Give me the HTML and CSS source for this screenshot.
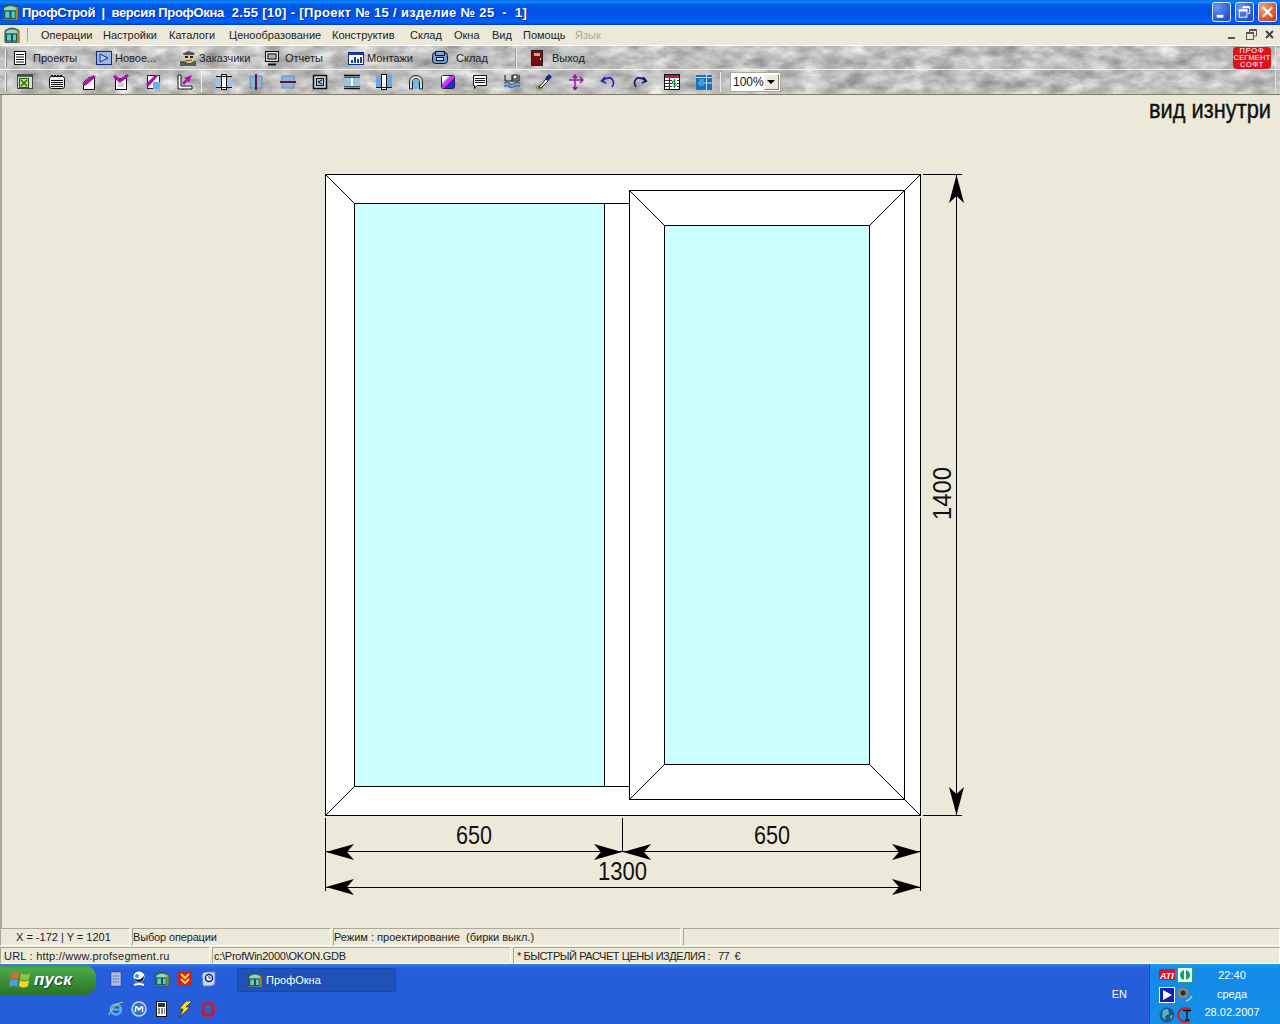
FILE: index.html
```html
<!DOCTYPE html>
<html lang="ru">
<head>
<meta charset="utf-8">
<title>ПрофСтрой</title>
<link rel="stylesheet" href="styles.css">
</head>
<body>
<svg class="defs" width="0" height="0" aria-hidden="true">
  <defs>
    <filter id="marble" x="0" y="0" width="100%" height="100%" color-interpolation-filters="sRGB">
      <feTurbulence type="fractalNoise" baseFrequency="0.045 0.09" numOctaves="4" seed="7"/>
      <feColorMatrix type="matrix" values="0.36 0.36 0 0 0.39  0.36 0.36 0 0 0.39  0.36 0.36 0 0 0.39  0 0 0 0 1"/>
    </filter>
    <symbol id="app" viewBox="0 0 16 17">
      <path d="M1 16V4Q8-1 15 4V16Z" fill="#2f8f86" stroke="#3a4a40"/>
      <path d="M2 5Q8 1 14 5V7H2Z" fill="#a4d0b8"/>
      <rect x="2.500" y="7.500" width="5" height="7" fill="#58d0c8" stroke="#14524c"/>
      <rect x="8.500" y="7.500" width="4" height="7" fill="#58d0c8" stroke="#14524c"/>
      <path d="M14 4V16" stroke="#b8861c" stroke-width="2"/>
      <path d="M1 15.500H15" stroke="#777"/>
    </symbol>
    <symbol id="door" viewBox="0 0 16 16">
      <rect x="2.500" y="0.500" width="11" height="15" fill="#7a0a14" stroke="#222"/>
      <rect x="5" y="3" width="6" height="3" fill="#d9a0a0"/>
      <rect x="11" y="8" width="1" height="2" fill="#e8d080"/>
    </symbol>
  </defs>
</svg>

<header class="titlebar">
  <svg class="ico16 title-ico"><use href="#app"/></svg>
  <span class="title-text title-a">ПрофСтрой  |  версия ПрофОкна</span><span class="title-text title-b">  2.55 [10] - [Проект № 15 / изделие № 25  -  1]</span>
  <div class="win-btns">
    <div class="wbtn"><svg width="18" height="18" viewBox="0 0 18 18"><rect x="4" y="12" width="7" height="3" fill="#fff"/></svg></div>
    <div class="wbtn"><svg width="18" height="18" viewBox="0 0 18 18" fill="none" stroke="#fff"><path d="M7.500 5.500V3.500H14.500V10.500H12.500"/><path d="M7 4H14" stroke-width="2"/><rect x="3.500" y="6.500" width="8" height="8"/><path d="M3 7.500H12" stroke-width="2"/></svg></div>
    <div class="wbtn wclose"><svg width="18" height="18" viewBox="0 0 18 18" stroke="#fff" stroke-width="2.200"><path d="M4 4L14 14M14 4L4 14"/></svg></div>
  </div>
</header>

<nav class="menubar">
  <svg class="ico16 menu-ico"><use href="#app"/></svg>
  <span class="menu-sep"></span>
  <div class="menu-items">
    <span>Операции</span><span>Настройки</span><span>Каталоги</span><span>Ценообразование</span><span>Конструктив</span><span>Склад</span><span>Окна</span><span>Вид</span><span>Помощь</span><span class="disabled">Язык</span>
  </div>
  <div class="mdi-btns">
    <svg width="18" height="18" viewBox="0 0 18 18"><rect x="5" y="11" width="7" height="2" fill="#555"/></svg>
    <svg width="18" height="18" viewBox="0 0 18 18" fill="none" stroke="#555"><path d="M7.500 6V3.500H14.500V10H12"/><path d="M7 4.500H14"/><rect x="4.500" y="6.500" width="7" height="7"/><path d="M4 7.500H12"/></svg>
    <svg width="18" height="18" viewBox="0 0 18 18" stroke="#444" stroke-width="2"><path d="M5 5L12 12M12 5L5 12"/></svg>
  </div>
</nav>

<section class="toolbars">
  <svg class="marble" width="1280" height="49"><rect width="1280" height="49" filter="url(#marble)"/></svg>
  <div class="tb-row tb-main">
    <div class="tb-item"><svg class="ico16" viewBox="0 0 16 16"><rect x="2.500" y="1.500" width="11" height="13" fill="#fff" stroke="#111"/><path d="M4 4.500H12M4 7H12M4 9.500H12M4 12H12" stroke="#111"/></svg><span class="lbl-mid">Проекты</span></div>
    <div class="tb-item"><svg class="ico16" viewBox="0 0 16 16"><rect x="0.500" y="1.500" width="15" height="13" fill="#9db8e8" stroke="#102a80"/><path d="M4 4L12 8L4 12Z" fill="#b8cdf0" stroke="#102a80"/></svg><span>Новое...</span></div>
    <div class="tb-item"><svg class="ico16" viewBox="0 0 16 16"><rect x="0" y="11" width="16" height="5" fill="#3a6a4a"/><ellipse cx="9" cy="7" rx="6" ry="6" fill="#e0c8a0"/><path d="M2 4L8 1L15 3L14 5H5Z" fill="#555"/><rect x="5" y="6" width="3" height="2" fill="#222"/><rect x="10" y="6" width="3" height="2" fill="#222"/><path d="M5 11L12 10" stroke="#833"/></svg><span>Заказчики</span></div>
    <div class="tb-item"><svg class="ico16" viewBox="0 0 16 16"><rect x="1.500" y="1.500" width="13" height="10" fill="#d8d8d8" stroke="#111"/><rect x="4" y="4" width="8" height="5" fill="#a8b4d0" stroke="#111"/><path d="M4 14.500H12" stroke="#111" stroke-width="2"/></svg><span class="lbl-mid">Отчеты</span></div>
    <div class="tb-item"><svg class="ico16" viewBox="0 0 16 16"><rect x="0.500" y="2.500" width="15" height="12" fill="#fff" stroke="#102a80"/><rect x="1" y="3" width="14" height="2" fill="#1c3ca8"/><path d="M4 13V10M7 13V7M10 13V9M13 13V7" stroke="#1c3ca8" stroke-width="2"/></svg><span>Монтажи</span></div>
    <div class="tb-item"><svg class="ico16" viewBox="0 0 16 16"><rect x="0.500" y="2.500" width="15" height="11" rx="3" fill="#6a9ad8" stroke="#111"/><rect x="3.500" y="1.500" width="9" height="4" fill="#7aa8e0" stroke="#111"/><rect x="4.500" y="7.500" width="7" height="3" fill="#dde" stroke="#111"/></svg><span class="lbl-far">Склад</span></div>
    <div class="tb-sep"></div>
    <div class="tb-item tb-exit"><svg class="ico16"><use href="#door"/></svg><span class="lbl-far">Выход</span></div>
    <div class="logo"><span>ПРОФ</span><span class="logo-mid">СЕГМЕНТ</span><span>СОФТ</span></div>
  </div>
  <div class="tb-row tb-tools">
    <div class="tool"><svg class="ico16" viewBox="0 0 16 16"><rect x="0.500" y="0.500" width="15" height="14" fill="#ddd" stroke="#444"/><rect x="1" y="1" width="14" height="2" fill="#555"/><rect x="2.500" y="4.500" width="9" height="9" fill="#b8e078" stroke="#275c10"/><path d="M4 6L10 12M10 6L4 12" stroke="#275c10" stroke-width="1.300"/></svg></div>
    <div class="tool"><svg class="ico16" viewBox="0 0 16 16"><rect x="0.500" y="2.500" width="15" height="12" rx="2" fill="#eee" stroke="#111"/><path d="M2 1.500H14" stroke="#111" stroke-dasharray="2 1"/><path d="M2 6.500H14M2 8.500H14M2 10.500H14M2 12.500H14" stroke="#111"/></svg></div>
    <div class="tool"><svg class="ico16" viewBox="0 0 16 16"><path d="M2.500 8.500L8 3.500H13.500V15.500H2.500Z" fill="#fff" stroke="#111"/><path d="M1 10L12 1L15 3L4 12Z" fill="#b010b0"/></svg></div>
    <div class="tool"><svg class="ico16" viewBox="0 0 16 16"><rect x="2.500" y="4.500" width="11" height="11" fill="#fff" stroke="#111"/><path d="M1 2L7 7L15 1" fill="none" stroke="#b010b0" stroke-width="3"/><path d="M5 10H11M5 12H11" stroke="#999"/></svg></div>
    <div class="tool"><svg class="ico16" viewBox="0 0 16 16"><rect x="2.500" y="1.500" width="12" height="13" fill="#fff" stroke="#222"/><rect x="8" y="8" width="7" height="7" fill="#6ab0f0"/><path d="M1 10L10 1H14L3 13Z" fill="#b010b0"/></svg></div>
    <div class="tool"><svg class="ico16" viewBox="0 0 16 16"><path d="M1 1H4V12H15V15H1Z" fill="#fff" stroke="#111"/><path d="M5 9L9 5L7 4L15 1L12 9L11 7L7 11Z" fill="#b010b0"/></svg></div>
    <div class="tool-sep"></div>
    <div class="tool"><svg class="ico16" viewBox="0 0 16 16"><rect x="0" y="3" width="16" height="10" fill="#9cc4e4"/><rect x="5.500" y="0.500" width="5" height="15" fill="#fff" stroke="#111"/><path d="M0 2.500H16M0 13.500H16" stroke="#111"/></svg></div>
    <div class="tool"><svg class="ico16" viewBox="0 0 16 16"><rect x="2" y="2" width="12" height="12" fill="#8cb4d8" stroke="#6a8cb0"/><path d="M8 0V16" stroke="#6a1030" stroke-width="2"/></svg></div>
    <div class="tool"><svg class="ico16" viewBox="0 0 16 16"><rect x="2" y="2" width="12" height="12" fill="#8cb4d8" stroke="#6a8cb0"/><path d="M0 8H16" stroke="#6a1030" stroke-width="2"/></svg></div>
    <div class="tool"><svg class="ico16" viewBox="0 0 16 16"><rect x="1.500" y="1.500" width="13" height="13" fill="#c8d4d8" stroke="#111" stroke-width="1.500"/><rect x="4.500" y="4.500" width="7" height="7" fill="#9cc4e4" stroke="#111"/><path d="M10 6L6 8L10 10" fill="none" stroke="#111"/></svg></div>
    <div class="tool"><svg class="ico16" viewBox="0 0 16 16"><rect x="0" y="4" width="16" height="8" fill="#9cc4e4"/><path d="M0 1.500H16M0 14.500H16" stroke="#111" stroke-width="1.500"/><path d="M0 3.500H16M0 12.500H16" stroke="#555"/><path d="M8 4V12" stroke="#fff" stroke-width="2"/></svg></div>
    <div class="tool"><svg class="ico16" viewBox="0 0 16 16"><rect x="0" y="1" width="16" height="13" fill="#6ea8e0"/><rect x="5.500" y="0.500" width="5" height="15" fill="#fff" stroke="#111"/><path d="M0 13.500H16" stroke="#111"/></svg></div>
    <div class="tool"><svg class="ico16" viewBox="0 0 16 16"><path d="M1.500 15V8Q1.500 1.500 8 1.500Q14.500 1.500 14.500 8V15H11.500V8Q11.500 4.500 8 4.500Q4.500 4.500 4.500 8V15Z" fill="#d8d8d8" stroke="#222"/><path d="M5 15V8Q5 5 8 5Q11 5 11 8V15Z" fill="#78b8e8"/></svg></div>
    <div class="tool"><svg class="ico16" viewBox="0 0 16 16"><rect x="1.500" y="1.500" width="13" height="13" rx="2" fill="#2030d0" stroke="#223"/><path d="M2 11L11 2H14V4L4 14H2Z" fill="#f020f0"/><path d="M2 9L9 2H11L2 11Z" fill="#80c8f0"/><path d="M2 2H9L2 9Z" fill="#fff"/></svg></div>
    <div class="tool"><svg class="ico16" viewBox="0 0 16 16"><path d="M1.500 1.500H14.500V11.500H5L2.500 14.500V11.500H1.500Z" fill="#fff" stroke="#111"/><path d="M3 4.500H13M3 6.500H13M3 8.500H13" stroke="#111"/></svg></div>
    <div class="tool"><svg class="ico16" viewBox="0 0 16 16"><path d="M1 1V7H15V1M8 1V7" fill="none" stroke="#111"/><rect x="9" y="1" width="4" height="4" fill="#fff" stroke="#111"/><path d="M0 9.500Q3 7.500 5 9.500T10 9.500T16 9.500M0 12.500Q3 10.500 5 12.500T10 12.500T16 12.500" fill="none" stroke="#3070c0" stroke-width="1.500"/></svg></div>
    <div class="tool"><svg class="ico16" viewBox="0 0 16 16"><ellipse cx="3.500" cy="13.500" rx="3.500" ry="2" fill="#8a9020"/><path d="M3 13L10 5L12 7L5 14Z" fill="#eee" stroke="#222"/><path d="M9 4L13 0L16 3L12 7Z" fill="#102a80"/></svg></div>
    <div class="tool"><svg class="ico16" viewBox="0 0 16 16" fill="none" stroke="#902090" stroke-width="1.500"><path d="M7 2V15M1 6H15M5 4L7 1L9 4M12 3L15 6L12 9M5 13L7 16L9 13"/></svg></div>
    <div class="tool"><svg class="ico16" viewBox="0 0 16 16" fill="none" stroke="#2020c0" stroke-width="1.600"><path d="M5 3L1.500 7L6 9"/><path d="M2 7Q8 2 12 5Q15 9 12 13"/></svg></div>
    <div class="tool"><svg class="ico16" viewBox="0 0 16 16" fill="none" stroke="#101860" stroke-width="1.600"><path d="M11 3L14.500 7L10 9"/><path d="M14 7Q8 2 4 5Q1 9 4 13"/></svg></div>
    <div class="tool"><svg class="ico16" viewBox="0 0 16 16"><rect x="0.500" y="0.500" width="15" height="15" fill="#fff" stroke="#111"/><rect x="1" y="1" width="14" height="3" fill="#d01030"/><path d="M1 6.500H15M1 9.500H15M1 12.500H15M5.500 4V15" stroke="#333"/><rect x="8" y="5" width="5" height="9" fill="#fff"/><path d="M10.500 5V14M8.500 7H12M8.500 12H12M8.500 7V9.500H12V12" fill="none" stroke="#089030"/></svg></div>
    <div class="tool"><svg class="ico16" viewBox="0 0 16 16"><rect x="0" y="1" width="16" height="15" fill="#1c70b8"/><path d="M0 3.500H16M10.500 0V16M2 9H16" stroke="#bfe0f8"/><rect x="3" y="5" width="5" height="7" fill="#38a0e0"/></svg></div>
    <div class="tool-sep tool-sep-wide"></div>
    <div class="combo"><span class="combo-val">100%</span><span class="combo-btn"><i></i></span></div>
  </div>
</section>

<main class="canvas">
  <svg class="drawing" width="1280" height="833" viewBox="0 95 1280 833">
    <g stroke="#000" stroke-width="1" fill="#fff">
      <rect x="325.500" y="174.500" width="595" height="641"/>
      <rect x="354.500" y="203.500" width="250" height="583" fill="#ccffff"/>
      <rect x="604.500" y="203.500" width="25" height="583"/>
      <path d="M325.500 174.500L354.500 203.500M325.500 815.500L354.500 786.500M920.500 174.500L904.500 190.500M920.500 815.500L904.500 799.500" fill="none"/>
      <rect x="629.500" y="190.500" width="275" height="609"/>
      <rect x="664.500" y="225.500" width="205" height="539" fill="#ccffff"/>
      <path d="M629.500 190.500L664.500 225.500M904.500 190.500L869.500 225.500M629.500 799.500L664.500 764.500M904.500 799.500L869.500 764.500" fill="none"/>
    </g>
    <g stroke="#000" stroke-width="1" fill="none">
      <path d="M923 174.500H962M923 815.500H962M956.500 175V815"/>
      <path d="M325.500 818V891M622.500 818V852M920.500 818V891"/>
      <path d="M326 851.500H920M326 887.500H920"/>
    </g>
    <g fill="#000">
      <path d="M956.500 175L964 203L956.500 196L949 203Z"/>
      <path d="M956.500 815L964 787L956.500 794L949 787Z"/>
      <path d="M326 852L354 844L347 852L354 860Z"/>
      <path d="M622 852L594 844L601 852L594 860Z"/>
      <path d="M623 852L651 844L644 852L651 860Z"/>
      <path d="M920 852L892 844L899 852L892 860Z"/>
      <path d="M326 887L354 879L347 887L354 895Z"/>
      <path d="M920 887L892 879L899 887L892 895Z"/>
    </g>
    <g class="dim">
      <text x="456" y="844" textLength="36" lengthAdjust="spacingAndGlyphs">650</text>
      <text x="754" y="844" textLength="36" lengthAdjust="spacingAndGlyphs">650</text>
      <text x="598" y="880" textLength="49" lengthAdjust="spacingAndGlyphs">1300</text>
      <text transform="translate(951 520) rotate(-90)" textLength="53" lengthAdjust="spacingAndGlyphs">1400</text>
    </g>
    <text class="view" transform="translate(1149 118) scale(1 1.300)" textLength="122" lengthAdjust="spacingAndGlyphs">вид изнутри</text>
  </svg>
</main>

<footer class="status">
  <div class="st-row st-first">
    <div class="cell c-xy">X = -172 | Y = 1201</div>
    <div class="cell c-op">Выбор операции</div>
    <div class="cell c-mode">Режим : проектирование  (бирки выкл.)</div>
    <div class="cell c-fill"></div>
  </div>
  <div class="st-row">
    <div class="cell c-url">URL : http://www.profsegment.ru</div>
    <div class="cell c-db">c:\ProfWin2000\OKON.GDB</div>
    <div class="cell c-price">* БЫСТРЫЙ РАСЧЕТ ЦЕНЫ ИЗДЕЛИЯ :   77  €</div>
  </div>
</footer>

<div class="taskbar">
  <div class="start">
    <svg class="flag" width="22" height="20" viewBox="0 0 22 20"><path d="M2 4Q6 1 10 3L9 9Q5 7 1 10Z" fill="#e8622a"/><path d="M12 3Q16 6 21 3L20 9Q15 12 11 9Z" fill="#8cc63f"/><path d="M1 11Q5 8 9 10L8 17Q4 14 0 17Z" fill="#4f9de8"/><path d="M11 10Q15 13 20 10L19 16Q14 19 10 16Z" fill="#f7d038"/></svg>
    <span>пуск</span>
  </div>
  <div class="quick">
    <svg class="ico16" viewBox="0 0 16 16"><rect x="3" y="1" width="10" height="14" rx="1" fill="#a8c0e8" stroke="#507"  stroke-opacity=".4"/><path d="M5 5H11M5 8H11M5 11H11" stroke="#506090" stroke-dasharray="1.500 1"/></svg>
    <svg class="ico16" viewBox="0 0 16 16"><circle cx="8" cy="6" r="5.500" fill="#fff"/><path d="M3 7Q8 11 13 5Q13 11 8 11Q4 11 3 7Z" fill="#102060"/><circle cx="6" cy="5" r="2" fill="#4090e0"/><path d="M3 14Q8 12 13 14" stroke="#fff" stroke-width="2" fill="none"/></svg>
    <svg class="ico16"><use href="#app"/></svg>
    <svg class="ico16" viewBox="0 0 16 16"><rect x="1" y="1" width="14" height="14" fill="#d02020"/><path d="M4 3L8 7L12 3M4 8L8 12L12 8" fill="none" stroke="#f8d850" stroke-width="2"/></svg>
    <svg class="ico16" viewBox="0 0 16 16"><path d="M2 4Q2 1 6 1H15V11Q15 15 11 15H3Z" fill="#c8d8f8" stroke="#6080c0"/><circle cx="9" cy="7" r="3.500" fill="#fff" stroke="#102080" stroke-width="1.500"/><path d="M9 5V7H11" fill="none" stroke="#102080"/></svg>
    <svg class="ico16" viewBox="0 0 16 16"><circle cx="8" cy="8.500" r="5" fill="none" stroke="#58b0f0" stroke-width="2.500"/><path d="M3.500 8.500H13" stroke="#58b0f0" stroke-width="2"/><path d="M1 14Q1 10 8 4Q14 0 15 2" fill="none" stroke="#e8c850"/></svg>
    <svg class="ico16" viewBox="0 0 16 16"><circle cx="8" cy="8" r="7" fill="#3070c0" stroke="#c0d8f0" stroke-width="1.500"/><path d="M4.500 11V6H6L8 9L10 6H11.500V11" fill="none" stroke="#fff" stroke-width="1.500"/></svg>
    <svg class="ico16" viewBox="0 0 16 16"><rect x="2.500" y="0.500" width="10" height="15" fill="#fff" stroke="#111"/><rect x="4" y="2" width="7" height="4" fill="#303030"/><path d="M4 8H6M7 8H9M10 8H11M4 10H6M7 10H9M10 10H11M4 12H6M7 12H9M10 12H11" stroke="#111" stroke-width="1.200"/></svg>
    <svg class="ico16" viewBox="0 0 16 16"><path d="M9 0H15L9 6H13L3 16L6 8H2Z" fill="#f8e020" stroke="#222" stroke-width=".7"/></svg>
    <svg class="ico16" viewBox="0 0 16 16"><ellipse cx="8" cy="8" rx="5.500" ry="7" fill="none" stroke="#d01828" stroke-width="3"/><ellipse cx="8" cy="8" rx="2" ry="5" fill="#3060c0"/></svg>
  </div>
  <div class="task"><svg class="ico16"><use href="#app"/></svg><span>ПрофОкна</span></div>
  <div class="lang">EN</div>
  <div class="tray">
    <div class="tray-icons">
      <svg class="ico16" viewBox="0 0 16 16"><rect x="0" y="2" width="16" height="11" rx="1" fill="#e01020"/><text class="ati" x="1" y="11.500">ATI</text></svg>
      <svg class="ico16" viewBox="0 0 16 16"><rect x="0.500" y="0.500" width="15" height="15" fill="#f0fff8" stroke="#20a080"/><circle cx="8" cy="8" r="5" fill="#1c9a70"/><rect x="7" y="2" width="2" height="12" fill="#e8fff0"/></svg>
      <svg class="ico16" viewBox="0 0 16 16"><rect x="0.500" y="0.500" width="15" height="15" fill="#0a20c0" stroke="#fff"/><path d="M4 3L13 8L4 13Z" fill="#fff"/></svg>
      <svg class="ico16" viewBox="0 0 16 16"><circle cx="6" cy="6" r="5.500" fill="#8a8478"/><circle cx="6" cy="6" r="2.500" fill="#2a2a2a"/><path d="M9 14Q13 13 15 9" fill="none" stroke="#b8c8f8" stroke-width="1.500"/></svg>
      <svg class="ico16" viewBox="0 0 16 16"><circle cx="8" cy="8" r="7.500" fill="#1c5c88"/><path d="M4 3L9 2L10 7L6 9L7 13L3 10Z" fill="#5ab0d0"/><path d="M11 9L14 8L12 13Z" fill="#5ab0d0"/></svg>
      <svg class="ico16" viewBox="0 0 16 16"><path d="M13 3A7 7 0 1 0 13 13" fill="none" stroke="#e01818" stroke-width="2"/><path d="M6 3.500H14M10 3.500V13M8 13H12" stroke="#111" stroke-width="1.400" fill="none"/></svg>
    </div>
    <div class="clock"><span>22:40</span><span>среда</span><span>28.02.2007</span></div>
  </div>
</div>
</body>
</html>
```
FILE: styles.css
```css
* { box-sizing: border-box; }
html, body { margin: 0; padding: 0; }
body {
  width: 1280px;
  height: 1024px;
  overflow: hidden;
  display: flex;
  flex-direction: column;
  background: #ece9d8;
  font-family: "Liberation Sans", Arial, sans-serif;
  font-size: 11px;
  color: #222;
}
.defs { position: absolute; }
.ico16 { width: 16px; height: 16px; display: block; flex: none; }

.titlebar {
  height: 25px;
  flex: none;
  display: flex;
  align-items: center;
  padding: 0 3px 1px 2px;
  background: linear-gradient(#0a6ae8 0, #0a8afa 2px, #0058e8 5px, #0050e4 14px, #0060f8 21px, #0058f0 23px, #003cc8 25px);
}
.title-ico { width: 17px; height: 18px; margin-right: 3px; }
.title-text {
  white-space: pre;
  color: #fff;
  font-weight: 700;
  font-size: 13px;
  text-shadow: 1px 1px 0 #0a2aa0;
}
.title-a { letter-spacing: -0.35px; }
.title-b { letter-spacing: 0.33px; }
.win-btns { margin-left: auto; display: flex; gap: 4px; }
.wbtn {
  width: 19px;
  height: 20px;
  display: flex;
  align-items: center;
  justify-content: center;
  border: 1px solid #e0e8ff;
  border-radius: 3px;
  background: radial-gradient(circle at 25% 25%, #6a94f0, #2a58d8 70%, #1c44c0);
}
.wclose { background: radial-gradient(circle at 25% 25%, #f0a088, #d8502a 70%, #b83818); }

.menubar {
  height: 21px;
  flex: none;
  display: flex;
  align-items: center;
  padding: 0 0 0 4px;
  background: #ece9d8;
  border-bottom: 1px solid #fff;
}
.menu-ico { width: 16px; height: 18px; }
.menu-sep { width: 1px; height: 14px; background: #aca899; margin-left: 7px; }
.menu-items {
  display: grid;
  grid-template-columns: 62px 66px 60px 103px 78px 44px 38px 31px 52px auto;
  margin-left: 13px;
  white-space: nowrap;
}
.menu-items .disabled { color: #aca899; }
.mdi-btns { margin-left: auto; display: flex; gap: 1px; padding-right: 1px; }

.toolbars {
  position: relative;
  height: 49px;
  flex: none;
  border-bottom: 1px solid #807c68;
  overflow: hidden;
  background: #bdbdbd;
}
.toolbars::after {
  content: "";
  position: absolute;
  right: 4px;
  top: 0;
  width: 1px;
  height: 49px;
  background: #e4e4e4;
}
.marble { position: absolute; left: 0; top: 0; display: block; }
.tb-row { position: relative; display: flex; align-items: center; }
.tb-row::before {
  content: "";
  position: absolute;
  left: 5px;
  top: 3px;
  width: 1px;
  height: 18px;
  background: #f2f2f2;
  box-shadow: 1px 0 0 #8a8a8a;
}
.tb-main {
  height: 24px;
  padding-left: 12px;
  border-bottom: 1px solid #f2f2f2;
}
.tb-item { width: 84px; flex: none; display: flex; align-items: center; gap: 3px; white-space: nowrap; }
.tb-item .lbl-far { margin-left: 5px; }
.tb-item .lbl-mid { margin-left: 2px; }
.tb-sep { width: 1px; height: 20px; background: #eee; box-shadow: -1px 0 0 #999; margin-right: 12px; }
.tb-exit { width: 60px; }
.tb-exit .lbl-far { margin-left: 4px; }
.logo {
  margin-left: auto;
  margin-right: 9px;
  width: 38px;
  height: 22px;
  background: #e0101c;
  border-radius: 4px;
  display: flex;
  flex-direction: column;
  align-items: center;
  justify-content: center;
  color: #fff;
  font-size: 7.500px;
  line-height: 7px;
  letter-spacing: 0.8px;
}
.logo-mid { letter-spacing: 0.2px; }
.tb-tools { height: 24px; padding-left: 9px; }
.tool { width: 32px; flex: none; display: flex; justify-content: center; }
.tool-sep { width: 7px; height: 20px; flex: none; }
.tool-sep::after { content: ""; display: block; width: 1px; height: 20px; background: #eee; }
.tool-sep-wide { width: 10px; }
.combo {
  width: 51px;
  height: 20px;
  background: #fff;
  border: 1px solid #aca899;
  display: flex;
  align-items: center;
  justify-content: space-between;
  padding: 1px;
}
.combo-val { font-size: 12px; color: #111; padding-left: 1px; }
.combo-btn {
  width: 16px;
  height: 16px;
  background: #ece9d8;
  border: 1px solid;
  border-color: #fff #807c68 #807c68 #fff;
  display: flex;
  align-items: center;
  justify-content: center;
}
.combo-btn i { border: 4px solid transparent; border-top: 4px solid #000; border-bottom: 0; }

.canvas { flex: 1; min-height: 0; border-left: 2px solid #aca899; overflow: hidden; }
.drawing { display: block; margin-left: -2px; }
.dim text { font-family: "Liberation Sans", Arial, sans-serif; font-size: 25px; fill: #111; }
.view { font-family: "Liberation Sans", Arial, sans-serif; font-size: 20px; fill: #111; stroke: #111; stroke-width: 0.300px; }

.status { flex: none; background: #ece9d8; }
.st-row { display: flex; height: 18px; padding-top: 1px; gap: 2px; }
.st-first { padding-top: 0; }
.cell {
  white-space: pre;
  border: 1px solid;
  border-color: #aca899 #fff #fff #aca899;
  padding-left: 1px;
  line-height: 17px;
  overflow: hidden;
  color: #222;
}
.c-xy { width: 130px; padding-left: 15px; }
.c-op { width: 199px; padding-left: 0; letter-spacing: -0.15px; }
.c-mode { width: 348px; padding-left: 0; }
.c-fill { flex: 1; }
.c-url { width: 210px; padding-left: 3px; letter-spacing: 0.23px; }
.c-db { width: 299px; letter-spacing: -0.25px; }
.c-price { flex: 1; padding-left: 3px; letter-spacing: -0.45px; }

.taskbar {
  height: 60px;
  flex: none;
  display: flex;
  align-items: flex-start;
  background: linear-gradient(#3a80e8 0, #2a66dc 3px, #245edb 6px, #245edb 100%);
}
.start {
  width: 96px;
  height: 30px;
  margin-top: 1px;
  border-radius: 0 12px 12px 0;
  background: linear-gradient(#3a9a3a 0, #4aa84a 15%, #368c36 60%, #2a722a 100%);
  display: flex;
  align-items: center;
  padding-left: 9px;
  gap: 3px;
  color: #fff;
  font-size: 17px;
  font-weight: 700;
  font-style: italic;
  text-shadow: 1px 1px 1px #143;
}
.quick {
  display: grid;
  grid-template-columns: repeat(5, 16px);
  column-gap: 7px;
  row-gap: 14px;
  margin: 7px 0 0 12px;
}
.task {
  width: 159px;
  height: 24px;
  margin: 4px 0 0 21px;
  background: #1e52b7;
  border: 1px solid #1a4aa8;
  border-radius: 2px;
  display: flex;
  align-items: center;
  gap: 3px;
  padding-left: 9px;
  color: #fff;
}
.lang { margin: 24px 22px 0 auto; color: #fff; line-height: 13px; }
.tray {
  width: 131px;
  height: 60px;
  display: flex;
  background: linear-gradient(#18a0f0 0, #128ae8 5px, #1290e8 100%);
  border-left: 1px solid #0a4cb0;
  color: #fff;
}
.tray-icons {
  display: grid;
  grid-template-columns: repeat(2, 16px);
  column-gap: 2px;
  row-gap: 3px;
  margin: 3px 0 0 9px;
  width: 34px;
  flex: none;
}
.ati { font-size: 9px; font-weight: 700; font-style: italic; fill: #fff; font-family: "Liberation Sans", sans-serif; }
.clock {
  flex: 1;
  display: flex;
  flex-direction: column;
  align-items: center;
  padding-top: 2px;
  line-height: 18.500px;
  margin-left: -9px;
}
```
